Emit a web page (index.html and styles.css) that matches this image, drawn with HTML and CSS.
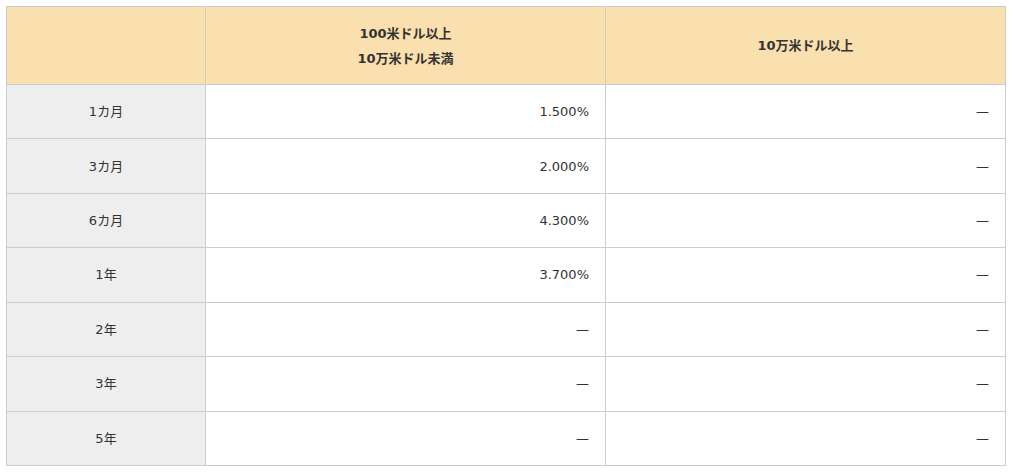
FILE: index.html
```html
<!DOCTYPE html>
<html lang="ja">
<head>
<meta charset="utf-8">
<title>金利表</title>
<link rel="stylesheet" href="styles.css">
</head>
<body>
<table class="rate-table">
  <colgroup>
    <col class="col-term">
    <col class="col-amount">
    <col class="col-amount">
  </colgroup>
  <thead>
    <tr>
      <th class="head-cell"></th>
      <th class="head-cell">100米ドル以上<br>10万米ドル未満</th>
      <th class="head-cell">10万米ドル以上</th>
    </tr>
  </thead>
  <tbody>
    <tr><th class="term-cell">1カ月</th><td class="rate-cell">1.500%</td><td class="rate-cell">—</td></tr>
    <tr><th class="term-cell">3カ月</th><td class="rate-cell">2.000%</td><td class="rate-cell">—</td></tr>
    <tr><th class="term-cell">6カ月</th><td class="rate-cell">4.300%</td><td class="rate-cell">—</td></tr>
    <tr><th class="term-cell">1年</th><td class="rate-cell">3.700%</td><td class="rate-cell">—</td></tr>
    <tr><th class="term-cell">2年</th><td class="rate-cell">—</td><td class="rate-cell">—</td></tr>
    <tr><th class="term-cell">3年</th><td class="rate-cell">—</td><td class="rate-cell">—</td></tr>
    <tr><th class="term-cell">5年</th><td class="rate-cell">—</td><td class="rate-cell">—</td></tr>
  </tbody>
</table>
</body>
</html>
```

FILE: styles.css
```css
html, body {
  margin: 0;
  padding: 0;
  background: #ffffff;
}

body {
  padding: 6px;
  font-family: "DejaVu Sans", "Noto Sans CJK JP", sans-serif;
  font-size: 13px;
  color: #333333;
}

.rate-table {
  width: 999px;
  border-collapse: collapse;
  table-layout: fixed;
}

.col-term {
  width: 199px;
}

.col-amount {
  width: 400px;
}

.rate-table th,
.rate-table td {
  border: 1px solid #cccccc;
  line-height: 25px;
  vertical-align: middle;
}

.head-cell {
  background: #fbe0af;
  font-weight: bold;
  text-align: center;
  height: 78px;
  padding: 0 16px;
  box-sizing: border-box;
}

.term-cell {
  background: #eeeeee;
  font-weight: normal;
  text-align: center;
  height: 54.43px;
  padding: 0 16px;
  box-sizing: border-box;
}

.rate-cell {
  background: #ffffff;
  text-align: right;
  height: 54.43px;
  padding: 0 16px;
  box-sizing: border-box;
}
```
